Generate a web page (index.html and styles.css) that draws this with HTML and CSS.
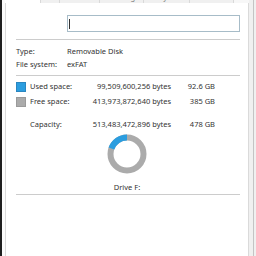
FILE: index.html
```html
<!DOCTYPE html>
<html>
<head>
<meta charset="utf-8">
<link rel="stylesheet" href="styles.css">
</head>
<body>
<div class="frame">
  <div class="dark"></div>
  <div class="gapl"></div>
  <div class="win">
    <div class="tabs">
      <div class="tab sel"></div>
      <div class="tab t1"><span>Tools</span></div>
      <div class="tab t2"><span>Hardware</span></div>
      <div class="tab t3"><span>Sharing</span></div>
      <div class="tab t4"><span>ReadyBoost</span></div>
      <div class="tab t5"><span>Customize</span></div>
      <div class="tab rest"></div>
    </div>
    <div class="panel">
      <div class="namerow">
        <div class="textbox"><div class="caret"></div></div>
      </div>
      <div class="sep s1"></div>
      <div class="info">
        <div class="irow"><span class="lab">Type:</span><span>Removable Disk</span></div>
        <div class="irow"><span class="lab">File system:</span><span>exFAT</span></div>
      </div>
      <div class="sep s2"></div>
      <div class="space">
        <span class="sw used"></span><span>Used space:</span><span class="r">99,509,600,256 bytes</span><span class="r">92.6 GB</span>
        <span class="sw free"></span><span>Free space:</span><span class="r">413,973,872,640 bytes</span><span class="r">385 GB</span>
      </div>
      <div class="space cap">
        <span></span><span>Capacity:</span><span class="r">513,483,472,896 bytes</span><span class="r">478 GB</span>
      </div>
      <div class="donut">
        <svg width="40" height="40" viewBox="0 0 40 40">
          <circle cx="20" cy="20" r="16.5" fill="none" stroke="#ababab" stroke-width="6"/>
          <circle cx="20" cy="20" r="16.5" fill="none" stroke="#2b9ddf" stroke-width="6" stroke-dasharray="20.1 200" transform="rotate(-90 20 20) scale(1 -1) translate(0 -40)"/>
        </svg>
      </div>
      <div class="drive">Drive F:</div>
      <div class="sep s3"></div>
    </div>
  </div>
  <div class="rgt"><div class="rline"></div></div>
</div>
</body>
</html>
```
FILE: styles.css
```css
html, body {
  margin: 0;
  padding: 0;
  background: #ffffff;
}
body {
  width: 256px;
  height: 256px;
  overflow: hidden;
  font-family: "Noto Sans", "Open Sans", sans-serif;
  font-size: 7.5px;
  color: #333333;
}
.frame {
  display: flex;
  height: 256px;
}
.dark {
  width: 2px;
  background: #1e1e1e;
}
.gapl {
  width: 3px;
  background: #fbfbfb;
}
.win {
  width: 244px;
  display: flex;
  flex-direction: column;
}
.tabs {
  display: flex;
  height: 3px;
  overflow: hidden;
}
.tab {
  height: 3px;
  overflow: hidden;
  background: #f0f0f0;
  border-right: 1px solid #d9d9d9;
  box-sizing: border-box;
  display: flex;
  justify-content: center;
}
.tab span {
  display: block;
  line-height: 10px;
  margin-top: -8px;
  color: #7a7a7a;
  white-space: nowrap;
}
.tab.sel {
  width: 36px;
  background: #ffffff;
  border-right: 1px solid #d9d9d9;
}
.t1 { width: 19px; }
.t2 { width: 40px; }
.t3 { width: 44px; }
.t4 { width: 46px; }
.t5 { width: 44px; }
.tab.rest { flex: 1; border-right: none; background: #f7f7f7; }
.panel {
  flex: 1;
  border-left: 1px solid #dadada;
  border-right: 1px solid #dadada;
  background: #ffffff;
  padding: 0 8px 0 10px;
  display: flex;
  flex-direction: column;
}
.namerow {
  display: flex;
  padding-left: 51px;
  margin-top: 12px;
}
.textbox {
  flex: 1;
  height: 17px;
  box-sizing: border-box;
  border: 1px solid #a7bcc8;
  position: relative;
}
.caret {
  position: absolute;
  left: 1px;
  top: 3px;
  width: 1px;
  height: 10px;
  background: #333;
}
.sep {
  height: 1px;
  background: #cccccc;
}
.s1 { margin-top: 7px; }
.info {
  margin-top: 5px;
}
.irow {
  display: flex;
  height: 13px;
  line-height: 13px;
}
.lab {
  width: 51px;
}
.s2 { margin-top: 4px; }
.space {
  display: grid;
  grid-template-columns: 14px 53px 88px 44px;
  grid-auto-rows: 15px;
  align-items: center;
  margin-top: 3px;
  line-height: 15px;
  white-space: nowrap;
}
.space.cap {
  margin-top: 8px;
  grid-auto-rows: 14px;
  line-height: 14px;
}
.r { text-align: right; }
.sw {
  width: 10px;
  height: 10px;
  box-sizing: border-box;
}
.sw.used { background: #2b9ddf; border: 1px solid #2a86c0; }
.sw.free { background: #ababab; border: 1px solid #9a9a9a; }
.donut {
  display: flex;
  justify-content: center;
  margin-top: 3px;
  height: 40px;
  padding-right: 2px;
}
.drive {
  text-align: center;
  margin-top: 7px;
  height: 12px;
  line-height: 12px;
  padding-right: 2px;
}
.s3 { margin-top: 1px; }
.rgt {
  flex: 1;
  background: #f0f0f0;
  display: flex;
  justify-content: flex-end;
  padding-right: 2px;
}
.rline {
  width: 1px;
  background: #c4c4c4;
}
```
